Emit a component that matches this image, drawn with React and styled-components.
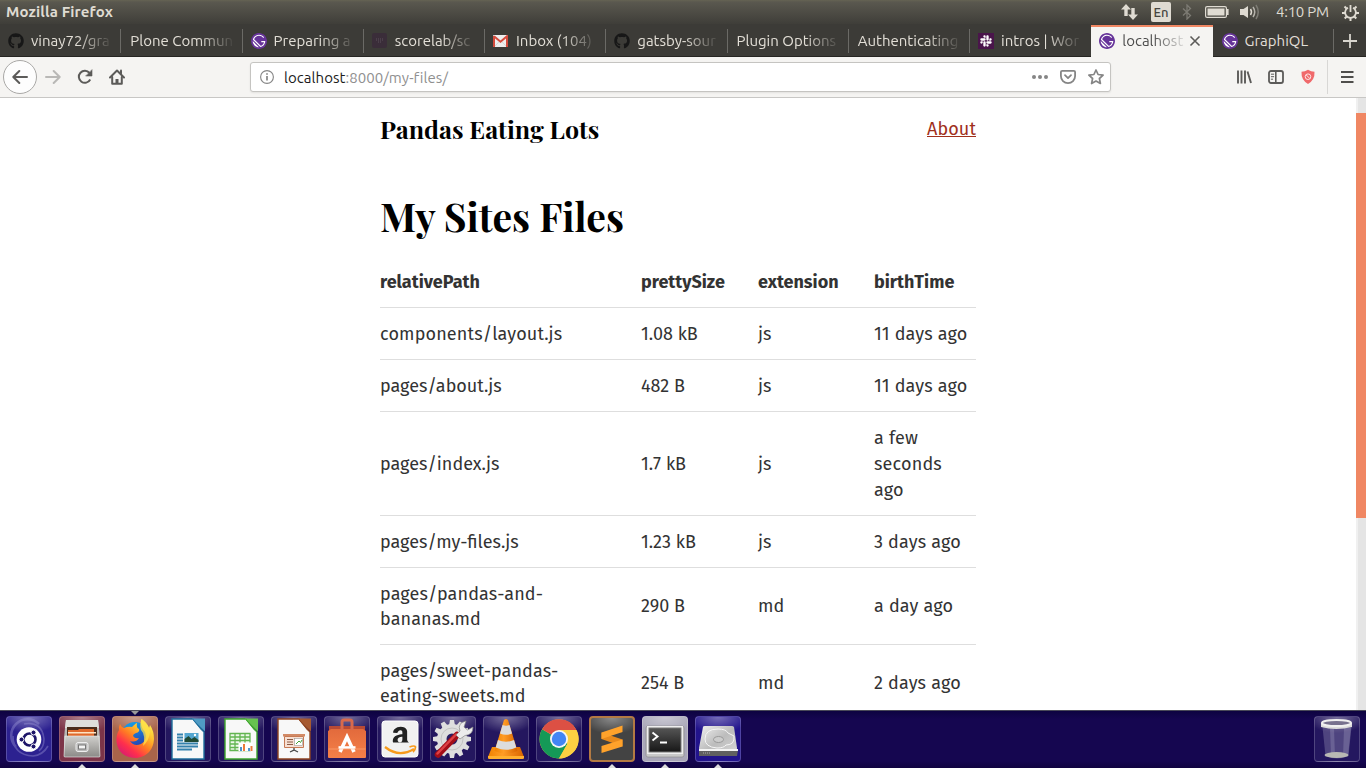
import React from "react";
import styled, { createGlobalStyle, css } from "styled-components";
import { FaGithub, FaSlack, FaAmazon } from "react-icons/fa";

const GlobalStyle = createGlobalStyle`
  * { box-sizing: border-box; }
  body { margin: 0; background: #fff; overflow: hidden; }
  svg { display: block; flex: none; }
`;

const uiFont = `"Ubuntu", "Noto Sans", "Open Sans", sans-serif`;

const Screen = styled.div`
  width: 1366px;
  height: 768px;
  display: flex;
  flex-direction: column;
  overflow: hidden;
  font-family: ${uiFont};
`;

/* ---------- top panel ---------- */
const Panel = styled.header`
  height: 24px;
  flex: none;
  display: flex;
  align-items: center;
  justify-content: space-between;
  padding: 0 7px 0 6px;
  color: #dfdbd2;
  background: linear-gradient(#656353 0, #5a584f 2px, #3f3e39 100%);
`;
const PanelTitle = styled.div`
  font-size: 15px;
  font-weight: 700;
  line-height: 24px;
  letter-spacing: 0.13px;
`;
const Indicators = styled.div`
  display: flex;
  align-items: center;
  height: 24px;
`;
const Indicator = styled.div`
  margin-left: ${(p) => p.$gap || 0}px;
`;
const Lang = styled.div`
  margin-left: 13px;
  width: 20px;
  height: 20px;
  border-radius: 2px;
  background: #dfdbd2;
  color: #45443f;
  font-size: 13px;
  font-weight: 500;
  line-height: 21px;
  text-align: center;
`;
const Clock = styled.div`
  width: 53px;
  margin-left: 15px;
  font-size: 15px;
  line-height: 24px;
  letter-spacing: -0.25px;
  white-space: nowrap;
`;

/* ---------- tabs ---------- */
const TabBar = styled.nav`
  height: 33px;
  flex: none;
  display: flex;
  background: #3c3b37;
  box-shadow: inset 0 -1px #262522;
`;
const Tab = styled.div`
  width: 121.25px;
  height: 33px;
  flex: none;
  display: flex;
  align-items: center;
  padding: 0 8px 0 8px;
  color: #e3dfd7;
  ${(p) =>
    p.$active
      ? css`
          background: #f5f4f2;
          color: #4c4c4c;
          border-top: 2px solid #f08763;
          margin-top: 1px;
          height: 32px;
          padding: 0 12px 2px 8px;
        `
      : css`
          background: linear-gradient(#6b6a66, #6b6a66) right 5px / 1px 24px no-repeat;
        `}
  ${(p) => p.$last && "padding-left: 9px;"}
  ${(p) => p.$plainEdge && "background: none;"}
`;
const TabIcon = styled.span`
  width: 18px;
  margin-right: 5px;
`;
const TabLabel = styled.span`
  flex: 1;
  min-width: 0;
  padding-left: ${(p) => (p.$bare ? 1 : 0)}px;
  overflow: hidden;
  white-space: nowrap;
  font-size: 15px;
  line-height: 20px;
  ${(p) =>
    !p.$whole &&
    css`
      mask-image: linear-gradient(to left, transparent 0, #000 36px);
    `}
`;
const NewTab = styled.div`
  flex: 1;
  display: flex;
  align-items: center;
  justify-content: center;
`;

/* ---------- navigation toolbar ---------- */
const Toolbar = styled.div`
  height: 41px;
  flex: none;
  display: flex;
  align-items: center;
  background: #f5f4f2;
  border-bottom: 1px solid #c8c7c5;
  padding: 0 12px 0 3px;
`;
const BackButton = styled.div`
  width: 34px;
  height: 34px;
  border-radius: 50%;
  border: 1px solid #a9a8a6;
  background: #fdfdfd;
  display: flex;
  align-items: center;
  justify-content: center;
`;
const NavIcons = styled.div`
  display: flex;
  gap: 16px;
  margin-left: 8px;
`;
const UrlBar = styled.div`
  width: 861px;
  height: 30px;
  margin-left: 125px;
  border: 1px solid #c5c4c1;
  border-radius: 3px;
  background: #fff;
  box-shadow: 0 1px 2px rgba(0, 0, 0, 0.08);
  display: flex;
  align-items: center;
  padding: 0 6px 0 9px;
`;
const Url = styled.div`
  flex: 1;
  margin-left: 10px;
  padding-top: 1px;
  font-size: 15px;
  line-height: 20px;
  letter-spacing: 0.05px;
  color: #8f8f8f;
  b { font-weight: 400; color: #1c1c1c; }
`;
const UrlActions = styled.div`
  display: flex;
  align-items: center;
  gap: 12px;
`;
const ToolIcons = styled.div`
  margin-left: auto;
  display: flex;
  align-items: center;
  gap: 16px;
`;
const ToolDivider = styled.div`
  width: 1px;
  height: 34px;
  margin: 0 13px 0 11px;
  background: #d8d7d5;
`;

/* ---------- web page ---------- */
const Viewport = styled.div`
  height: 612px;
  flex: none;
  display: flex;
  background: #fff;
  overflow: hidden;
`;
const Page = styled.main`
  width: 596px;
  margin-left: 380px;
  font-family: "Fira Sans", "Noto Sans", "Open Sans", sans-serif;
  color: #333;
`;
const SiteHeader = styled.div`
  display: flex;
  justify-content: space-between;
  height: 64px;
  padding-top: 18px;
`;
const SiteTitle = styled.h3`
  margin: 0;
  font: 700 25px/25px "Playfair Display", "Liberation Serif", serif;
  color: #000;
`;
const AboutLink = styled.a`
  height: 26px;
  font-size: 18px;
  line-height: 26px;
  letter-spacing: 0.1px;
  color: #a0301c;
  text-decoration: underline;
  text-underline-offset: 1px;
  text-decoration-thickness: 1px;
`;
const Heading = styled.h1`
  margin: 29px 0 0;
  height: 65.35px;
  font: 700 39px/50px "Playfair Display", "Liberation Serif", serif;
  color: #000;
`;
const Row = styled.div`
  display: grid;
  grid-template-columns: 261px 117px 116px 102px;
  align-items: center;
  padding: 13.9px 0 ${(p) => (p.$tight ? 10.3 : 11.1)}px;
  border-bottom: 1px solid #dedede;
  font-size: 18px;
  line-height: 25.9px;
  white-space: pre-line;
  font-weight: ${(p) => (p.$head ? 700 : 400)};
`;
const Cell = styled.span`
  letter-spacing: ${(p) => p.$spacing || "normal"};
`;
const ScrollTrack = styled.div`
  width: 10px;
  margin-left: auto;
  padding-top: 15px;
  background: linear-gradient(to right, #f0f0f0 2px, #e5e5e5 2px);
`;
const ScrollThumb = styled.div`
  height: 405px;
  background: #f08763;
`;

/* ---------- launcher ---------- */
const Launcher = styled.footer`
  height: 58px;
  flex: none;
  display: flex;
  gap: 7px;
  padding: 5px 6px 0;
  border-top: 1px solid #4a4a58;
  background: linear-gradient(#0d0340, #150650 8px, #150650 50px, #100340);
  position: relative;
`;
const tones = {
  ubuntu: "#2c2190",
  files: "#7c3448",
  firefox: "#a9644a",
  plain: "#24175f",
  dark: "#434343",
  terminal: "#a9a7b8",
  disk: "#22148c",
};
const Tile = styled.div`
  width: 46px;
  height: 46px;
  border-radius: 4px;
  border: ${(p) => (p.$tone === "dark" ? "2px solid #b37a43" : "1px solid rgba(255,255,255,.2)")};
  background: radial-gradient(ellipse 30px 16px at 50% 0, rgba(255, 255, 255, 0.38), transparent),
    ${(p) => tones[p.$tone]};
  display: flex;
  align-items: center;
  justify-content: center;
  position: relative;
  ${(p) => p.$end && "margin-left: auto; margin-right: 0;"}
`;
const RunningMark = styled.i`
  position: absolute;
  left: 50%;
  margin-left: -4.5px;
  ${(p) => (p.$top ? "top: -6px;" : `bottom: ${p.$low ? -8 : -7}px;`)}
  border: 4px solid transparent;
  ${(p) =>
    p.$top
      ? "border-top-color: #9a9a9a; border-bottom-width: 0;"
      : "border-bottom-color: #ddd; border-top-width: 0;"}
`;

/* ---------- small icons ---------- */
const Gatsby = () => (
  <svg width="16" height="16" viewBox="0 0 24 24">
    <circle cx="12" cy="12" r="11" fill="#fff" />
    <path
      fill="#663399"
      d="M12 0C5.4 0 0 5.4 0 12s5.4 12 12 12 12-5.4 12-12S18.6 0 12 0zm0 2.571c3.171 0 5.915 1.46 7.629 3.772l-1.286 1.028C16.886 5.486 14.657 4.286 12 4.286c-3.343 0-6.171 2.143-7.286 5.143l9.857 9.857c2.486-.857 4.373-3 4.973-5.572h-4.115V12h6c0 4.457-3.172 8.228-7.372 9.17L2.83 9.944C3.772 5.743 7.543 2.57 12 2.57zm-9.429 9.6l9.344 9.258c-2.4-.086-4.801-.943-6.601-2.743-1.8-1.8-2.743-4.201-2.743-6.515z"
    />
  </svg>
);
const Github = () => <FaGithub size={16} color="#171717" />;
const Scorelab = () => (
  <svg width="15" height="15" viewBox="0 0 15 15">
    <rect width="15" height="15" rx="2" fill="#3a2d39" />
    <path d="M4.5 5v3M6.5 5v5M8.5 5v5M10.5 5v3" stroke="#4b3f4a" strokeWidth="1" />
  </svg>
);
const Gmail = () => (
  <svg width="15" height="12" viewBox="0 0 15 12">
    <rect width="15" height="12" rx="1" fill="#eee" />
    <path d="M1 1.2L7.5 6.8 14 1.2V12" fill="none" stroke="#d54b3d" strokeWidth="2" />
    <path d="M1 1v11" stroke="#d54b3d" strokeWidth="2" />
    <path d="M2 11l3.8-4M13 11L9.2 7" stroke="#cfcfcf" strokeWidth=".8" />
  </svg>
);
const SlackSquare = () => (
  <svg width="16" height="16" viewBox="0 0 16 16">
    <rect width="16" height="16" fill="#4a154b" />
    <FaSlack x="1.5" y="1.5" size={13} color="#fff" />
  </svg>
);

/* ---------- indicator icons ---------- */
const NetworkIcon = () => (
  <svg width="17" height="16" viewBox="0 0 17 16" fill="#dfdbd2">
    <path d="M5 0l5 5.500H6.700V12H3.300V5.500H0zM12 16l-5-5.500h3.300V4h3.400v6.500H17z" />
  </svg>
);
const BluetoothIcon = () => (
  <svg width="10" height="16" viewBox="0 0 10 16" fill="none" stroke="#7d7b74" strokeWidth="1.300">
    <path d="M1 4.500l7.500 7L5 15V1l3.500 3.500L1 11.500" />
  </svg>
);
const BatteryIcon = () => (
  <svg width="24" height="12" viewBox="0 0 24 12">
    <rect x=".6" y=".6" width="20.800" height="10.800" rx="1.500" fill="none" stroke="#dfdbd2" strokeWidth="1.200" />
    <rect x="2.500" y="2.500" width="17" height="7" fill="#dfdbd2" />
    <path d="M22.800 3v6" stroke="#dfdbd2" strokeWidth="1.600" />
  </svg>
);
const SoundIcon = () => (
  <svg width="21" height="16" viewBox="0 0 21 16">
    <path d="M0 5h3.500L8 2v12l-4.500-3H0z" fill="#dfdbd2" />
    <path d="M10.500 5q2 3 0 6" fill="none" stroke="#dfdbd2" strokeWidth="1.500" />
    <path d="M13 3q3.500 5 0 10" fill="none" stroke="#b5b2aa" strokeWidth="1.500" />
    <path d="M16 1q4.500 7 0 14" fill="none" stroke="#7d7b74" strokeWidth="1.500" />
  </svg>
);
const PowerIcon = () => (
  <svg width="17" height="17" viewBox="0 0 17 17" fill="none" stroke="#dfdbd2">
    <path d="M6 3.700a5.400 5.400 0 1 0 5 0" strokeWidth="1.800" />
    <path d="M8.500 1v7" strokeWidth="1.800" />
    <path d="M2.500 2.500l2 2M14.500 2.500l-2 2M0 9h3M17 9h-3M2.700 14.500l2-2M14.300 14.500l-2-2M8.500 17v-3" strokeWidth="2" />
  </svg>
);

/* ---------- toolbar icons ---------- */
const Stroke = ({ size = 16, color = "#5c5b59", width = 2, children }) => (
  <svg width={size} height={size} viewBox="0 0 16 16" fill="none" stroke={color} strokeWidth={width} strokeLinecap="round" strokeLinejoin="round">
    {children}
  </svg>
);
const BackIcon = () => (
  <Stroke><path d="M15 8H1.500M7.300 2L1.300 8l6 6" /></Stroke>
);
const ForwardIcon = () => (
  <Stroke color="#b9b8b6"><path d="M1 8h13.500M8.700 2l6 6-6 6" /></Stroke>
);
const ReloadIcon = () => (
  <Stroke>
    <path d="M13.200 10.500A6 6 0 1 1 12.500 4" strokeLinecap="butt" />
    <path d="M15 1v6H9z" fill="#5c5b59" strokeWidth=".6" />
  </Stroke>
);
const HomeIcon = () => (
  <Stroke>
    <path d="M1 8.500L8 1.500l7 7" />
    <path d="M3.200 8v6.800h9.600V8" />
    <path d="M12 1.500v3" />
    <path d="M8 10v4" strokeWidth="3" strokeLinecap="butt" />
  </Stroke>
);
const InfoIcon = () => (
  <svg width="14" height="14" viewBox="0 0 14 14" fill="none" stroke="#858585">
    <circle cx="7" cy="7" r="6.400" strokeWidth="1.100" />
    <path d="M7 6v4.500M7 3.200v1.600" strokeWidth="1.700" />
  </svg>
);
const DotsIcon = () => (
  <svg width="16" height="16" viewBox="0 0 16 16" fill="#858585">
    <circle cx="2" cy="8" r="2" /><circle cx="8" cy="8" r="2" /><circle cx="14" cy="8" r="2" />
  </svg>
);
const PocketIcon = () => (
  <Stroke color="#858585" width={1.8}>
    <path d="M2.200 1.800h11.600q1.300 0 1.300 1.300V7A7.100 7.100 0 0 1 .9 7V3.100q0-1.300 1.300-1.300z" />
    <path d="M5 6.200l3 2.900 3-2.900" />
  </Stroke>
);
const StarIcon = () => (
  <Stroke color="#858585" width={1.7}>
    <path d="M8 1l2.100 4.500 5 .6-3.700 3.400 1 5L8 12l-4.400 2.500 1-5L.9 6.100l5-.6z" />
  </Stroke>
);
const LibraryIcon = () => (
  <Stroke width={1.9}>
    <path d="M2 1.500v13M5.500 1.500v13M9 1.500v13M11.500 2.500L15 14" strokeLinecap="butt" />
  </Stroke>
);
const SidebarIcon = () => (
  <Stroke width={1.8}>
    <rect x="1" y="2" width="14" height="12" rx="2" />
    <path d="M7.800 2v12" strokeWidth="1.600" />
    <path d="M3.300 5.200h2.400M3.300 7.700h2.400M3.300 10.200h1.400" strokeWidth="1" />
  </Stroke>
);
const ShieldIcon = () => (
  <svg width="16" height="16" viewBox="0 0 16 16">
    <path d="M8 .8q3 2 6.500 2Q15 11 8 15 1 11 1.500 2.800 5 2.800 8 .8z" fill="#f0696b" />
    <circle cx="8" cy="7.700" r="2.800" fill="none" stroke="#fff" strokeWidth=".8" />
    <path d="M6.300 6l3.400 3.400" stroke="#fff" strokeWidth=".8" />
  </svg>
);
const MenuIcon = () => (
  <svg width="13" height="12" viewBox="0 0 13 12"><path d="M0 1h12.500M0 6h12.500M0 11h12.500" stroke="#4f4e4c" strokeWidth="2" /></svg>
);
const CloseIcon = () => (
  <svg width="12" height="12" viewBox="0 0 12 12"><path d="M1.500 1.500l9 9M10.500 1.500l-9 9" stroke="#5c5b59" strokeWidth="1.600" /></svg>
);
const PlusIcon = () => (
  <svg width="14" height="14" viewBox="0 0 14 14"><path d="M7 0v14M0 7h14" stroke="#d8d5ce" strokeWidth="1.800" /></svg>
);

/* ---------- launcher icons ---------- */
const Art = ({ children }) => <svg width="44" height="44" viewBox="1 1 44 44">{children}</svg>;

const UbuntuArt = () => (
  <Art>
    <g fill="none" stroke="#9d98d8" opacity=".4">
      <path d="M10 31A16 16 0 0 1 33 8" strokeWidth="2.500" />
      <path d="M18 8q18-3 20 15 0 8-5 12" strokeWidth="1.600" />
      <path d="M7 20q0 19 20 20 10-1 15-10" strokeWidth="1.600" />
    </g>
    <circle cx="23" cy="23.500" r="12.300" fill="#fff" />
    <circle cx="23.500" cy="23.500" r="6" fill="none" stroke="#1d1468" strokeWidth="2.600" />
    <g fill="#1d1468" stroke="#fff" strokeWidth="1">
      <circle cx="15.500" cy="23.500" r="2.500" /><circle cx="27.500" cy="16.500" r="2.500" /><circle cx="27.500" cy="30.500" r="2.500" />
    </g>
  </Art>
);
const FilesArt = () => (
  <Art>
    <defs>
      <linearGradient id="cab" x2="0" y2="1"><stop stopColor="#d0cfcc" /><stop offset="1" stopColor="#8b8a87" /></linearGradient>
    </defs>
    <path d="M7 4h32l2 17v20H5V21z" fill="url(#cab)" />
    <path d="M7 4h32l1 8H6z" fill="#dededb" />
    <path d="M8 11h30v10H8z" fill="#4a2c1c" />
    <path d="M9 14h10l1-1h15v8H9z" fill="#e06a2c" />
    <path d="M9 16h28v1.500H9z" fill="#ffe3c2" />
    <path d="M6 20h34l1 20q0 1-1 1H6q-1 0-1-1z" fill="url(#cab)" stroke="#eee" strokeWidth=".6" />
    <rect x="17" y="26.500" width="12" height="9" rx="2" fill="#bbb" stroke="#eee" strokeWidth="1" />
    <rect x="19.500" y="29" width="7" height="4" fill="#f4f4f4" stroke="#777" />
  </Art>
);
const FirefoxArt = () => (
  <Art>
    <defs>
      <linearGradient id="fox" x1=".85" y1=".05" x2=".2" y2=".9">
        <stop stopColor="#fff44f" /><stop offset=".3" stopColor="#ffbd2c" /><stop offset=".55" stopColor="#ff7a24" /><stop offset=".8" stopColor="#ff2f4c" /><stop offset="1" stopColor="#e0206a" />
      </linearGradient>
      <linearGradient id="globe" x2=".3" y2="1"><stop stopColor="#14a8ef" /><stop offset="1" stopColor="#293fae" /></linearGradient>
    </defs>
    <circle cx="23" cy="20" r="14" fill="url(#globe)" />
    <path d="M8 8q1 3 4 4 4-2 8-1 4-4 5-4-1 5 2 6 1 3-3 4-3 1-3 3 2 3 6 2-3 5-9 3 4 6 11 3 7-4 4-12-5-5-4-13 6 4 8 9l1-3q4 6 4 14-1 16-17 19Q7 42 4.500 26 4 19 7 14q-.5-3 1-6z" fill="url(#fox)" />
    <path d="M30 3q7 5 8 13-1 9-7 14 3-11-2-16-2-6 1-11z" fill="#ffe24a" opacity=".75" />
  </Art>
);
const DocPaper = ({ color, light, children }) => (
  <Art>
    <path d="M7 3h21l11 13v27H7z" fill="#f8f8f8" stroke={color} strokeWidth="1.400" />
    <path d="M27 2.500h13v13z" fill={light} />
    <path d="M28 3l11 13-3-2-8-10z" fill={color} />
    {children}
  </Art>
);
const WriterArt = () => (
  <DocPaper color="#1f6f9c" light="#4f9bc4">
    <path d="M12 18.500h6M12 21.500h6M12 24.500h6M12 27.500h21M12 30.500h21M12 33.500h15" stroke="#3581ad" strokeWidth="1.800" />
    <rect x="19.500" y="17" width="14" height="9" fill="#54a6d0" />
    <path d="M19.500 26v-3l4-3 3 3 3-2 4 3v2z" fill="#204a35" /><circle cx="30" cy="19" r="1.200" fill="#fff" />
  </DocPaper>
);
const CalcArt = () => (
  <DocPaper color="#3da52c" light="#67c34f">
    <path d="M12 17.500h20v17H12zM12 21h20M12 24.500h20M12 28h20M12 31.500h20M17 17v17M22 17v17M27 17v17" fill="#eef8ea" stroke="#63b552" strokeWidth="1.300" />
    <rect x="20.500" y="26.500" width="14" height="8.500" fill="#fff" />
    <path d="M23 35v-4M31 35v-3" stroke="#4f94cc" strokeWidth="2" /><path d="M26 35v-7M33.500 35v-5" stroke="#eb7b3a" strokeWidth="2" />
  </DocPaper>
);
const ImpressArt = () => (
  <DocPaper color="#8f4420" light="#a7592f">
    <path d="M12 18h22v2.500H12z" fill="#d28a66" />
    <path d="M13.500 20.500h19v11h-19z" fill="#f7dfd2" stroke="#c67a55" />
    <path d="M16 23.500h6M16 26h6M16 28.500h6" stroke="#8a5a44" /><rect x="23.500" y="22.500" width="8" height="7" fill="#fff" stroke="#999" strokeWidth=".6" />
    <path d="M25 28l3-3 1.500 1.500L31 24" fill="none" stroke="#45a33a" /><path d="M23 32v2l-4 2M23 34l4 2" fill="none" stroke="#444" strokeWidth="1.300" />
  </DocPaper>
);
const BagArt = () => (
  <Art>
    <defs><linearGradient id="bag" x2="0" y2="1"><stop stopColor="#e26a3c" /><stop offset="1" stopColor="#f58048" /></linearGradient></defs>
    <path d="M5 10h36v6H5z" fill="#b84a35" /><path d="M4 15l3-2h32l3 2v26q0 1-1 1H5q-1 0-1-1z" fill="url(#bag)" />
    <path d="M18 14V6q0-2 2-2h6q2 0 2 2v8" fill="none" stroke="#d96a4c" strokeWidth="3" />
    <path d="M16 36l7-15 7 15" fill="none" stroke="#fff" strokeWidth="3.600" /><path d="M14.500 31.500h17" stroke="#fff" strokeWidth="2.600" />
    <path d="M4.500 33h37" stroke="#ffad82" strokeWidth=".6" />
  </Art>
);
const AmazonArt = () => (
  <Art>
    <defs><clipPath id="letter"><path d="M10 6h26v20.500H10z" /></clipPath></defs>
    <rect x="5" y="5" width="36" height="36" rx="3" fill="#f1f1f1" stroke="#fff" />
    <g clipPath="url(#letter)"><FaAmazon x="9" y="9" size={29} color="#222" /></g>
    <path d="M8 31q14 11 29 2" fill="none" stroke="#f79a1c" strokeWidth="2.300" /><path d="M32.500 31q5-2 6 0 0 3-2.500 5" fill="none" stroke="#f79a1c" strokeWidth="1.700" />
  </Art>
);
const teeth = Array.from({ length: 12 }, (_, i) => i * 30);
const SettingsArt = () => (
  <Art>
    <g fill="#dedede">
      <circle cx="22" cy="23" r="15" />
      {teeth.map((a) => <path key={a} d="M19 9.500l1-5.500h4l1 5.500z" transform={`rotate(${a} 22 23)`} />)}
    </g>
    <circle cx="22" cy="23" r="11" fill="none" stroke="#c3c3c3" /><circle cx="22" cy="23" r="5.500" fill="#2a1e63" />
    <path d="M8 38.500L27 19" stroke="#a30e18" strokeWidth="6.500" strokeLinecap="round" /><path d="M7.500 37.500L26 18.500" stroke="#dd4045" strokeWidth="2.500" strokeLinecap="round" />
    <path d="M26 19l4-4q-3-8 6-10l-2 6 3.500 3 5.500-3q0 8-8 8.500l-5 3.500z" fill="#ececec" stroke="#888" strokeWidth=".7" />
  </Art>
);
const VlcArt = () => (
  <Art>
    <defs><linearGradient id="cone"><stop stopColor="#f08200" /><stop offset=".4" stopColor="#ff9c25" /><stop offset="1" stopColor="#d86400" /></linearGradient></defs>
    <path d="M9 31h28l4 10q0 2-2 2H7q-2 0-2-2z" fill="url(#cone)" /><path d="M5 40h36v2q0 1-2 1H7q-2 0-2-1z" fill="#ffb02f" />
    <path d="M21 4q2-2 4 0l9.500 31q-11 5-23 0z" fill="url(#cone)" />
    <path d="M19.500 9q3.500 1.500 7 0l2.500 8.500q-6 2.500-12 0zM15 24q8 3.500 16 0l2.300 7.500q-10 4.500-20.600 0z" fill="#dcdcdc" />
  </Art>
);
const ChromeArt = () => (
  <Art>
    <circle cx="23" cy="23" r="19.500" fill="#fdd042" />
    <path d="M23 23L6.100 13.300A19.500 19.500 0 0 0 23 42.500l8.500-14.700z" fill="#159957" />
    <path d="M23 23L6.100 13.300A19.500 19.500 0 0 1 40.500 14H23z" fill="#dc5044" />
    <path d="M23 14h17.500a19.500 19.500 0 0 1-17.500 28.500l8.500-15z" fill="#fdd042" />
    <circle cx="23" cy="23" r="9" fill="#f5f5f5" /><circle cx="23" cy="23" r="7.200" fill="#4285f4" />
  </Art>
);
const SublimeArt = () => (
  <Art>
    <path d="M12.500 16.500L33.500 23.500v7L12.500 23z" fill="#e98a1c" />
    <path d="M12.500 16.500L33.500 9.500V16L12.500 23zM12.500 30L33.500 23.500v7L12.500 37z" fill="#ffa22b" />
  </Art>
);
const TerminalArt = () => (
  <Art>
    <defs><linearGradient id="scr" x2="0" y2="1"><stop stopColor="#555" /><stop offset="1" stopColor="#171717" /></linearGradient></defs>
    <rect x="4" y="10" width="38" height="31" rx="2" fill="#c8c8c8" stroke="#888" strokeWidth=".6" />
    <rect x="5" y="10" width="36" height="28" fill="#eee" /><rect x="7" y="12" width="32" height="24" fill="url(#scr)" stroke="#777" />
    <path d="M10.500 16.500l5 4-5 4M18 26.500h7" fill="none" stroke="#fff" strokeWidth="1.900" />
  </Art>
);
const DiskArt = () => (
  <Art>
    <defs><linearGradient id="hd" x2="1" y2="1"><stop stopColor="#f1f1f1" /><stop offset=".5" stopColor="#bcbcbc" /><stop offset="1" stopColor="#dadada" /></linearGradient></defs>
    <path d="M8 11q0-1 2-1h27q1 0 2 1l3 21-1 8H5l-1-8z" fill="url(#hd)" /><path d="M4 34h39l-1 6H4z" fill="#606060" /><path d="M4 33h39v2H4z" fill="#f4f4f4" />
    <path d="M10 23q0-10 13-10 8 0 10 4l6 3q1 9-8 9-2 3-9 3-12-1-12-9z" fill="none" stroke="#f5f5f5" /><ellipse cx="23.500" cy="23.500" rx="5" ry="3" fill="#ccc" stroke="#999" />
    <path d="M8 37h8" stroke="#aaa" strokeDasharray="1 1" />
  </Art>
);
const TrashArt = () => (
  <Art>
    <path d="M8.500 11h29l-3 29q-11 5-23 0z" fill="#8b84ac" opacity=".42" /><path d="M30 12h7l-3 28-5 1zM16 12h4l1 29h-4z" fill="#bdb8d3" opacity=".25" />
    <ellipse cx="22.500" cy="39" rx="12" ry="3" fill="#b9b9b4" />
    <path d="M7 7v4q15 4 31 0V7z" fill="#dcdcdc" /><ellipse cx="22.500" cy="7" rx="14.500" ry="3" fill="#77718e" stroke="#f0f0f0" strokeWidth="2" />
  </Art>
);

/* ---------- data ---------- */
const tabs = [
  { icon: Github, label: "vinay72/gra" },
  { label: "Plone Commun" },
  { icon: Gatsby, label: "Preparing a" },
  { icon: Scorelab, label: "scorelab/sc" },
  { icon: Gmail, label: "Inbox (104)" },
  { icon: Github, label: "gatsby-sour" },
  { label: "Plugin Options" },
  { label: "Authenticating" },
  { icon: SlackSquare, label: "intros | Wor", plainEdge: true },
  { icon: Gatsby, label: "localhost", active: true },
  { icon: Gatsby, label: "GraphiQL", last: true },
];
const files = [
  { cells: ["components/layout.js", "1.08 kB", "js", "11 days ago"], pathSpacing: "0.15px" },
  { cells: ["pages/about.js", "482 B", "js", "11 days ago"] },
  { cells: ["pages/index.js", "1.7 kB", "js", "a few\nseconds\nago"] },
  { cells: ["pages/my-files.js", "1.23 kB", "js", "3 days ago"] },
  { cells: ["pages/pandas-and-\nbananas.md", "290 B", "md", "a day ago"], pathSpacing: "0.12px", tight: true },
  { cells: ["pages/sweet-pandas-\neating-sweets.md", "254 B", "md", "2 days ago"], pathSpacing: "0.08px" },
];
const apps = [
  { art: UbuntuArt, tone: "ubuntu" },
  { art: FilesArt, tone: "files", running: true },
  { art: FirefoxArt, tone: "firefox", running: true, focused: true },
  { art: WriterArt, tone: "plain" },
  { art: CalcArt, tone: "plain" },
  { art: ImpressArt, tone: "plain" },
  { art: BagArt, tone: "plain" },
  { art: AmazonArt, tone: "plain" },
  { art: SettingsArt, tone: "plain" },
  { art: VlcArt, tone: "plain" },
  { art: ChromeArt, tone: "plain" },
  { art: SublimeArt, tone: "dark", running: true },
  { art: TerminalArt, tone: "terminal", running: true },
  { art: DiskArt, tone: "disk", running: true },
  { art: TrashArt, tone: "plain", end: true },
];

export default function App() {
  return (
    <Screen>
      <GlobalStyle />
      <Panel>
        <PanelTitle>Mozilla Firefox</PanelTitle>
        <Indicators>
          <Indicator><NetworkIcon /></Indicator>
          <Lang>En</Lang>
          <Indicator $gap={11}><BluetoothIcon /></Indicator>
          <Indicator $gap={13}><BatteryIcon /></Indicator>
          <Indicator $gap={11}><SoundIcon /></Indicator>
          <Clock>4:10 PM</Clock>
          <Indicator $gap={13}><PowerIcon /></Indicator>
        </Indicators>
      </Panel>
      <TabBar>
        {tabs.map(({ icon: Icon, label, active, last, plainEdge }) => (
          <Tab key={label} $active={active} $last={last} $plainEdge={plainEdge}>
            {Icon && <TabIcon><Icon /></TabIcon>}
            <TabLabel $bare={!Icon} $whole={last}>{label}</TabLabel>
            {active && <CloseIcon />}
          </Tab>
        ))}
        <NewTab><PlusIcon /></NewTab>
      </TabBar>
      <Toolbar>
        <BackButton><BackIcon /></BackButton>
        <NavIcons><ForwardIcon /><ReloadIcon /><HomeIcon /></NavIcons>
        <UrlBar>
          <InfoIcon />
          <Url><b>localhost</b>:8000/my-files/</Url>
          <UrlActions><DotsIcon /><PocketIcon /><StarIcon /></UrlActions>
        </UrlBar>
        <ToolIcons><LibraryIcon /><SidebarIcon /><ShieldIcon /></ToolIcons>
        <ToolDivider />
        <MenuIcon />
      </Toolbar>
      <Viewport>
        <Page>
          <SiteHeader>
            <SiteTitle>Pandas Eating Lots</SiteTitle>
            <AboutLink>About</AboutLink>
          </SiteHeader>
          <Heading>My Sites Files</Heading>
          <Row $head>
            <Cell>relativePath</Cell><Cell>prettySize</Cell><Cell>extension</Cell><Cell>birthTime</Cell>
          </Row>
          {files.map(({ cells: [path, size, extension, birth], pathSpacing, tight }) => (
            <Row key={path} $tight={tight}>
              <Cell $spacing={pathSpacing}>{path}</Cell>
              <Cell>{size}</Cell>
              <Cell>{extension}</Cell>
              <Cell $spacing="0.18px">{birth}</Cell>
            </Row>
          ))}
        </Page>
        <ScrollTrack><ScrollThumb /></ScrollTrack>
      </Viewport>
      <Launcher>
        {apps.map(({ art: Icon, tone, running, focused, end }, i) => (
          <Tile key={i} $tone={tone} $end={end}>
            <Icon />
            {running && <RunningMark $low={tone === "dark"} />}
            {focused && <RunningMark $top />}
          </Tile>
        ))}
      </Launcher>
    </Screen>
  );
}
